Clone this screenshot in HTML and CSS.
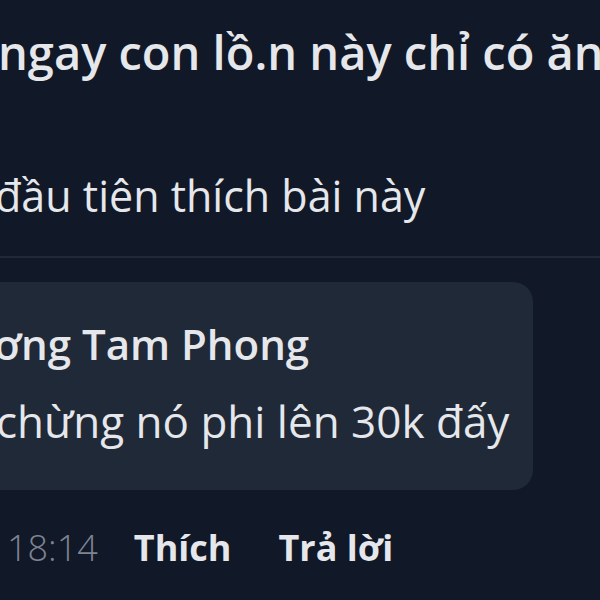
FILE: index.html
```html
<!DOCTYPE html>
<html lang="vi">
<head>
    <meta charset="UTF-8">
    <meta name="viewport" content="width=device-width, initial-scale=1.0">
    <title>Bình luận</title>
    <link rel="stylesheet" href="styles.css">
</head>
<body>

    <div class="post">
        <p class="post-text">ngay con lồ.n này chỉ có ăn</p>
        <p class="post-likes">đầu tiên thích bài này</p>
    </div>

    <div class="comments">
        <div class="comment">
            <div class="bubble">
                <div class="author">ơng Tam Phong</div>
                <div class="body">chừng nó phi lên 30k đấy</div>
            </div>
            <div class="actions">
                <span class="time">18:14</span>
                <span class="action like">Thích</span>
                <span class="action">Trả lời</span>
            </div>
        </div>
    </div>

</body>
</html>
```

FILE: styles.css
```css
body {
    font-family: "Open Sans", "Noto Sans", sans-serif;
    background-color: #111827;
    color: #e5e7eb;
    margin: 0;
    height: 600px;
    overflow: hidden;
    white-space: nowrap;
}

p {
    margin: 0;
}

.post {
    padding-top: 20px;
    padding-bottom: 30px;
    border-bottom: 2px solid #1f2937;
}

.post-text {
    font-size: 47px;
    font-weight: 600;
    line-height: 64px;
    margin-left: -2px;
}

.post-likes {
    font-size: 43px;
    line-height: 60px;
    margin-top: 82px;
    margin-left: -5px;
}

.comments {
    padding-top: 24px;
}

.bubble {
    background-color: #1f2937;
    width: 553px;
    margin-left: -20px;
    padding: 34px 0 39px 16px;
    border-radius: 0 20px 20px 0;
    box-sizing: border-box;
}

.author {
    font-size: 42px;
    font-weight: 600;
    line-height: 56px;
    margin-left: -2px;
}

.body {
    font-size: 44px;
    line-height: 60px;
    margin-top: 19px;
}

.actions {
    display: flex;
    align-items: baseline;
    padding-left: 7px;
    margin-top: 33px;
    font-size: 36px;
    line-height: 50px;
}

.time {
    color: #7f8491;
    font-weight: 300;
    margin-right: 36px;
}

.action {
    font-weight: 700;
}

.like {
    margin-right: 47px;
}
```
